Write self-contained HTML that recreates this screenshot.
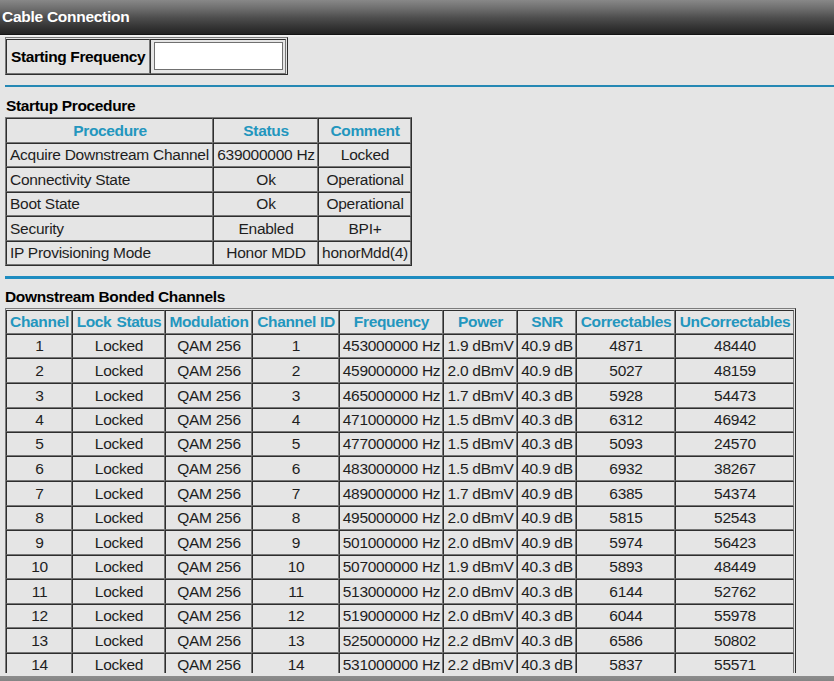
<!DOCTYPE html><html lang="en"><head><meta charset="utf-8"><title>Cable Connection</title><style>
html,body{margin:0;padding:0}
body{width:834px;height:681px;overflow:hidden;background:#e5e5e5;font-family:"Liberation Sans",sans-serif;font-size:15.5px;letter-spacing:-0.27px;color:#1e1e1e;position:relative}
#hdr{position:absolute;left:0;top:0;width:834px;height:35px;box-sizing:border-box;border-bottom:1px solid #141414;background:linear-gradient(#888 0%,#6e6e6e 25%,#4e4e4e 52%,#383838 75%,#232323 100%);color:#fff;font-weight:bold;line-height:17px;padding:8px 0 0 2px}
#hl{position:absolute;left:0;top:35px;width:834px;height:2px;background:linear-gradient(#f3f3f3,#ececec)}
.sec{letter-spacing:-0.35px;position:absolute;left:5px;font-weight:bold;line-height:17px;color:#000;white-space:nowrap}
.rule{position:absolute;left:5px;width:829px;height:2px;background:#2a86ab}
table.g{position:absolute;border-collapse:separate;border-spacing:0;table-layout:fixed;box-sizing:border-box;border:1px solid;border-color:#7c7c7c #2e2e2e #2e2e2e #7c7c7c}
table.g td,table.g th{box-sizing:border-box;border:1px solid;border-color:#2e2e2e #767676 #767676 #2e2e2e;padding:0 0 0 1px;line-height:17px;text-align:center;vertical-align:top;white-space:nowrap;overflow:hidden;font-weight:normal}
table.g th{color:#2396be;font-weight:bold;letter-spacing:-0.34px}
table.g td.l{text-align:left;padding-left:3px}
tr.r24 td,tr.r24 th{padding-top:2px}
tr.r25 td,tr.r25 th{padding-top:3px}
#t1{left:5px;top:37px;width:283px;height:38px;padding:1px 1px 0 0}
#t1 td{padding-top:2px}
#t1 td.lab{letter-spacing:-0.39px;font-weight:bold;color:#000;text-align:left;padding-left:4px;padding-top:8px}
#freq{display:block;box-sizing:border-box;width:129px;height:28px;margin:0 0 0 2px;border:1px solid #707070;background:#fff;padding:0;font:inherit;letter-spacing:normal}
#btm{position:absolute;left:0;top:673px;width:834px;height:8px;background:linear-gradient(#e5e5e5 0,#e5e5e5 2.5px,#8c8c8c 3.5px,#858585 100%)}
</style></head><body>
<div id="hdr">Cable Connection</div><div id="hl"></div>
<table class="g" id="t1"><colgroup><col style="width:144px"><col style="width:136px"></colgroup><tr style="height:35px"><td class="lab">Starting Frequency</td><td><input id="freq" type="text" value=""></td></tr></table>
<div class="rule" style="top:85px;background:#2588b4"></div>
<div class="sec" style="top:97px;left:6px">Startup Procedure</div>
<table class="g" style="left:5px;top:117px;width:407px"><colgroup><col style="width:207px"><col style="width:105px"><col style="width:93px"></colgroup>
<tr class="r25" style="height:25px"><th>Procedure</th><th>Status</th><th>Comment</th></tr>
<tr class="r24" style="height:24px"><td class="l">Acquire Downstream Channel</td><td>639000000 Hz</td><td>Locked</td></tr>
<tr class="r25" style="height:25px"><td class="l">Connectivity State</td><td>Ok</td><td>Operational</td></tr>
<tr class="r24" style="height:24px"><td class="l">Boot State</td><td>Ok</td><td>Operational</td></tr>
<tr class="r25" style="height:25px"><td class="l">Security</td><td>Enabled</td><td>BPI+</td></tr>
<tr class="r24" style="height:24px"><td class="l">IP Provisioning Mode</td><td>Honor MDD</td><td>honorMdd(4)</td></tr>
</table>
<div class="rule" style="top:276px;height:3px;background:#1e8cc0"></div>
<div class="sec" style="top:288px">Downstream Bonded Channels</div>
<table class="g" style="left:5px;top:308px;width:791px;padding:1px 1px 0 0"><colgroup><col style="width:66px"><col style="width:93px"><col style="width:87px"><col style="width:87px"><col style="width:104px"><col style="width:74px"><col style="width:59px"><col style="width:99px"><col style="width:119px"></colgroup>
<tr class="r24" style="height:24px"><th>Channel</th><th style="word-spacing:1.6px;letter-spacing:-0.44px">Lock Status</th><th>Modulation</th><th>Channel ID</th><th>Frequency</th><th>Power</th><th>SNR</th><th>Correctables</th><th>UnCorrectables</th></tr>
<tr class="r24" style="height:24px"><td>1</td><td>Locked</td><td>QAM 256</td><td>1</td><td>453000000 Hz</td><td>1.9 dBmV</td><td>40.9 dB</td><td>4871</td><td>48440</td></tr>
<tr class="r25" style="height:25px"><td>2</td><td>Locked</td><td>QAM 256</td><td>2</td><td>459000000 Hz</td><td>2.0 dBmV</td><td>40.9 dB</td><td>5027</td><td>48159</td></tr>
<tr class="r25" style="height:25px"><td>3</td><td>Locked</td><td>QAM 256</td><td>3</td><td>465000000 Hz</td><td>1.7 dBmV</td><td>40.3 dB</td><td>5928</td><td>54473</td></tr>
<tr class="r24" style="height:24px"><td>4</td><td>Locked</td><td>QAM 256</td><td>4</td><td>471000000 Hz</td><td>1.5 dBmV</td><td>40.3 dB</td><td>6312</td><td>46942</td></tr>
<tr class="r24" style="height:24px"><td>5</td><td>Locked</td><td>QAM 256</td><td>5</td><td>477000000 Hz</td><td>1.5 dBmV</td><td>40.3 dB</td><td>5093</td><td>24570</td></tr>
<tr class="r25" style="height:25px"><td>6</td><td>Locked</td><td>QAM 256</td><td>6</td><td>483000000 Hz</td><td>1.5 dBmV</td><td>40.9 dB</td><td>6932</td><td>38267</td></tr>
<tr class="r25" style="height:25px"><td>7</td><td>Locked</td><td>QAM 256</td><td>7</td><td>489000000 Hz</td><td>1.7 dBmV</td><td>40.9 dB</td><td>6385</td><td>54374</td></tr>
<tr class="r24" style="height:24px"><td>8</td><td>Locked</td><td>QAM 256</td><td>8</td><td>495000000 Hz</td><td>2.0 dBmV</td><td>40.9 dB</td><td>5815</td><td>52543</td></tr>
<tr class="r25" style="height:25px"><td>9</td><td>Locked</td><td>QAM 256</td><td>9</td><td>501000000 Hz</td><td>2.0 dBmV</td><td>40.9 dB</td><td>5974</td><td>56423</td></tr>
<tr class="r24" style="height:24px"><td>10</td><td>Locked</td><td>QAM 256</td><td>10</td><td>507000000 Hz</td><td>1.9 dBmV</td><td>40.3 dB</td><td>5893</td><td>48449</td></tr>
<tr class="r25" style="height:25px"><td>11</td><td>Locked</td><td>QAM 256</td><td>11</td><td>513000000 Hz</td><td>2.0 dBmV</td><td>40.3 dB</td><td>6144</td><td>52762</td></tr>
<tr class="r24" style="height:24px"><td>12</td><td>Locked</td><td>QAM 256</td><td>12</td><td>519000000 Hz</td><td>2.0 dBmV</td><td>40.3 dB</td><td>6044</td><td>55978</td></tr>
<tr class="r25" style="height:25px"><td>13</td><td>Locked</td><td>QAM 256</td><td>13</td><td>525000000 Hz</td><td>2.2 dBmV</td><td>40.3 dB</td><td>6586</td><td>50802</td></tr>
<tr class="r24" style="height:24px"><td>14</td><td>Locked</td><td>QAM 256</td><td>14</td><td>531000000 Hz</td><td>2.2 dBmV</td><td>40.3 dB</td><td>5837</td><td>55571</td></tr>
</table>
<div id="btm"></div>
</body></html>
